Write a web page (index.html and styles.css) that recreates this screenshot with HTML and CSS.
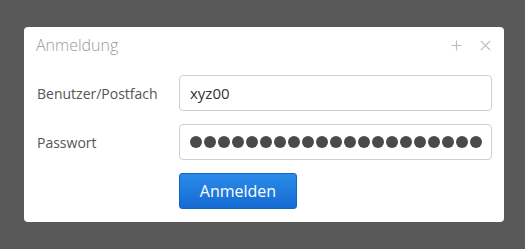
FILE: index.html
```
<!DOCTYPE html>
<html lang="de">
<head>
<meta charset="utf-8">
<title>Anmeldung</title>
<link rel="stylesheet" href="styles.css">
</head>
<body>
<div class="dialog">
  <div class="header">
    <div class="title">Anmeldung</div>
    <div class="tools">
      <svg class="icon" width="11" height="11" viewBox="0 0 11 11"><path d="M5.5 0.5v10M0.5 5.5h10" stroke="#bdbdbd" stroke-width="1.2" fill="none"/></svg>
      <svg class="icon" width="11" height="11" viewBox="0 0 11 11"><path d="M0.8 0.8l9.4 9.4M10.2 0.8l-9.4 9.4" stroke="#bdbdbd" stroke-width="1.2" fill="none"/></svg>
    </div>
  </div>
  <div class="form">
    <div class="label">Benutzer/Postfach</div>
    <div class="field"><span class="value">xyz00</span></div>
    <div class="label">Passwort</div>
    <div class="field"><div class="dots"><i></i><i></i><i></i><i></i><i></i><i></i><i></i><i></i><i></i><i></i><i></i><i></i><i></i><i></i><i></i><i></i><i></i><i></i><i></i><i></i><i></i></div></div>
    <div class="spacer"></div>
    <div class="actions"><button class="btn">Anmelden</button></div>
  </div>
</div>
</body>
</html>
```
FILE: styles.css
```
html, body {
  margin: 0;
  padding: 0;
  background: #595959;
  width: 525px;
  height: 249px;
  overflow: hidden;
  font-family: "Open Sans", "Noto Sans", sans-serif;
}
body {
  padding: 27px 0 0 24px;
  box-sizing: border-box;
}
.dialog {
  width: 480px;
  height: 195px;
  background: #fff;
  border-radius: 4px;
  box-sizing: border-box;
}
.header {
  height: 36px;
  display: flex;
  align-items: center;
  justify-content: space-between;
  padding: 0 13px 0 12px;
}
.title {
  font-size: 16px;
  font-weight: 300;
  color: #9a9a9a;
  line-height: 24px;
}
.tools {
  display: flex;
  align-items: center;
  gap: 18px;
}
.icon {
  display: block;
}
.form {
  display: grid;
  grid-template-columns: 143px 1fr;
  row-gap: 13px;
  padding: 12px 12px 13px 12px;
  align-items: center;
}
.label {
  font-size: 14px;
  color: #555;
  padding-left: 1px;
}
.field {
  height: 36px;
  border: 1px solid #cfcfcf;
  border-radius: 4px;
  box-sizing: border-box;
  display: flex;
  align-items: center;
  padding-left: 10px;
}
.value {
  font-size: 15px;
  color: #333;
}
.dots {
  display: flex;
  gap: 2px;
}
.dots i {
  width: 12px;
  height: 12px;
  border-radius: 50%;
  background: #4a4a4a;
  display: block;
}
.actions {
  display: flex;
}
.btn {
  width: 118px;
  height: 36px;
  border: 1px solid #1463c4;
  border-radius: 3px;
  background: linear-gradient(#2b8ce9, #156ad3);
  color: #fff;
  font-family: "Open Sans", "Noto Sans", sans-serif;
  font-size: 16px;
  padding: 0;
}
```
